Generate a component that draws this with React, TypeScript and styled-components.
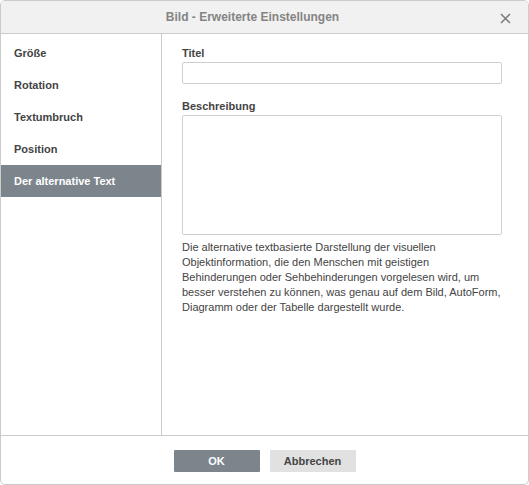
import React from "react";
import styled, { createGlobalStyle } from "styled-components";

const Global = createGlobalStyle`
  html, body { margin: 0; padding: 0; background: #fff; }
  body { font-family: "Liberation Sans", Arial, sans-serif; }
  * { box-sizing: border-box; }
`;

const Dialog = styled.div`
  width: 529px;
  height: 485px;
  border: 1px solid #cbcbcb;
  border-radius: 5px;
  background: #fff;
  display: flex;
  flex-direction: column;
  overflow: hidden;
  color: #444;
  font-size: 11px;
  font-family: "Liberation Sans", Arial, sans-serif;
`;

const Header = styled.div`
  position: relative;
  height: 33px;
  flex: none;
  background: #f1f1f1;
  border-bottom: 1px solid #cbcbcb;
  display: flex;
  align-items: center;
  justify-content: center;
  padding-right: 24px;
  font-size: 12px;
  font-weight: bold;
  color: #848484;
`;

const CloseButton = styled.div`
  position: absolute;
  right: 17px;
  top: 11px;
  width: 12px;
  height: 12px;
  display: flex;
  align-items: center;
  justify-content: center;
`;

const Body = styled.div`
  flex: 1;
  display: flex;
  min-height: 0;
`;

const Sidebar = styled.div`
  width: 161px;
  flex: none;
  border-right: 1px solid #cbcbcb;
  padding-top: 3px;
  display: flex;
  flex-direction: column;
`;

const NavItem = styled.div<{ $active?: boolean }>`
  height: 32px;
  display: flex;
  align-items: center;
  padding-left: 13px;
  font-weight: bold;
  background: ${(p) => (p.$active ? "#7d858c" : "transparent")};
  color: ${(p) => (p.$active ? "#fff" : "#444")};
`;

const Content = styled.div`
  flex: 1;
  padding: 12px 0 0 20px;
  display: flex;
  flex-direction: column;
`;

const Label = styled.div<{ $top?: number }>`
  font-weight: bold;
  line-height: 14px;
  height: 14px;
  margin-top: ${(p) => p.$top ?? 0}px;
  margin-bottom: 2px;
`;

const TextInput = styled.div`
  width: 320px;
  height: 22px;
  border: 1px solid #cfcfcf;
  border-radius: 2px;
  background: #fff;
`;

const TextArea = styled.div`
  width: 320px;
  height: 120px;
  border: 1px solid #cfcfcf;
  border-radius: 2px;
  background: #fff;
`;

const Description = styled.div`
  width: 322px;
  margin-top: 5px;
  line-height: 15px;
  font-size: 11px;
  color: #444;
`;

const Footer = styled.div`
  height: 49px;
  flex: none;
  border-top: 1px solid #cbcbcb;
  display: flex;
  justify-content: center;
  align-items: flex-start;
  padding-top: 14px;
  gap: 10px;
`;

const Button = styled.div<{ $primary?: boolean }>`
  width: 86px;
  height: 22px;
  display: flex;
  align-items: center;
  justify-content: center;
  font-weight: bold;
  font-size: 11px;
  border-radius: 1px;
  background: ${(p) => (p.$primary ? "#7d858c" : "#e1e1e1")};
  color: ${(p) => (p.$primary ? "#fff" : "#444")};
`;

export default function App() {
  const items = ["Größe", "Rotation", "Textumbruch", "Position", "Der alternative Text"];
  return (
    <>
      <Global />
      <Dialog>
        <Header>
          Bild - Erweiterte Einstellungen
          <CloseButton>
            <svg width="11" height="11" viewBox="0 0 11 11">
              <path d="M1 1 L10 10 M10 1 L1 10" stroke="#7a7a7a" strokeWidth="1.5" />
            </svg>
          </CloseButton>
        </Header>
        <Body>
          <Sidebar>
            {items.map((it, i) => (
              <NavItem key={it} $active={i === 4}>
                {it}
              </NavItem>
            ))}
          </Sidebar>
          <Content>
            <Label>Titel</Label>
            <TextInput />
            <Label $top={15}>Beschreibung</Label>
            <TextArea />
            <Description>
              Die alternative textbasierte Darstellung der visuellen Objektinformation, die den Menschen mit geistigen Behinderungen oder Sehbehinderungen vorgelesen wird, um besser verstehen zu können, was genau auf dem Bild, AutoForm, Diagramm oder der Tabelle dargestellt wurde.
            </Description>
          </Content>
        </Body>
        <Footer>
          <Button $primary>OK</Button>
          <Button>Abbrechen</Button>
        </Footer>
      </Dialog>
    </>
  );
}
